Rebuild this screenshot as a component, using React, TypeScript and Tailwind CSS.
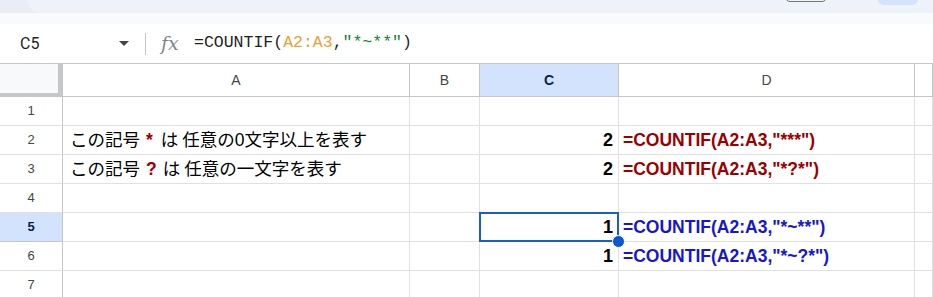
import React from "react";

const cols = ["", "A", "B", "C", "D", ""];

function Cell({ children, className = "" }: { children?: React.ReactNode; className?: string }) {
  return (
    <div className={`relative flex items-center border-b border-r border-[#e1e1e1] ${className}`}>
      {children}
    </div>
  );
}

function RowHead({ n, active }: { n: number; active?: boolean }) {
  return (
    <div
      className={`flex items-center justify-center border-b border-r text-[13px] ${
        active
          ? "bg-[#d3e3fd] border-b-[#c4c7c5] border-r-[#c4c7c5] font-bold text-[#0b1f46]"
          : "bg-white border-b-[#e1e1e1] border-r-[#c4c7c5] text-[#444746]"
      }`}
    >
      {n}
    </div>
  );
}

const red = "text-[#990000]";
const blue = "text-[#1717c9]";

export default function App() {
  const rows: { n: number; a?: React.ReactNode; c?: string; d?: React.ReactNode; sel?: boolean }[] = [
    { n: 1 },
    {
      n: 2,
      a: (
        <>
          この記号<span className={`ml-[6px] mr-[8px] font-bold ${red}`}>*</span>は<span className="ml-[4px]">任意の0文字以上を表す</span>
        </>
      ),
      c: "2",
      d: <span className={red}>=COUNTIF(A2:A3,"***")</span>,
    },
    {
      n: 3,
      a: (
        <>
          この記号<span className={`ml-[6px] mr-[6px] font-bold ${red}`}>?</span>は<span className="ml-[4px]">任意の一文字を表す</span>
        </>
      ),
      c: "2",
      d: <span className={red}>=COUNTIF(A2:A3,"*?*")</span>,
    },
    { n: 4 },
    { n: 5, c: "1", d: <span className={blue}>=COUNTIF(A2:A3,"*~**")</span>, sel: true },
    { n: 6, c: "1", d: <span className={blue}>=COUNTIF(A2:A3,"*~?*")</span> },
    { n: 7 },
  ];

  return (
    <div className="w-[933px] h-[297px] overflow-hidden bg-white font-['Liberation_Sans','Noto_Sans_CJK_JP',Arial,sans-serif]">
      {/* top chrome */}
      <div className="relative h-[13px] bg-[#e9eef6]">
        <div className="ml-[28px] h-full rounded-bl-[14px] bg-[#eef2f9]" />
        <div className="absolute left-[785px] top-[-12px] h-[14px] w-[42px] rounded-[5px] border border-[#747775]" />
        <div className="absolute left-[878px] top-[-12px] h-[17px] w-[40px] rounded-[6px] bg-[#d3e3fd]" />
      </div>
      <div className="h-[11px] bg-[#f8fafd]" />

      {/* formula bar */}
      <div className="flex h-[40px] items-center border-b border-[#c4c7c5] bg-white">
        <div className="w-[112px] pl-[20px] font-['Roboto',sans-serif] text-[16px] text-[#1f1f1f]">C5</div>
        <svg width="10" height="5" viewBox="0 0 10 5" className="ml-[7px]">
          <path d="M0 0h10L5 5z" fill="#444746" />
        </svg>
        <div className="ml-[16px] h-[22px] w-px bg-[#c4c7c5]" />
        <div className="ml-[15px] w-[22px] font-['DejaVu_Serif',serif] text-[19px] italic leading-none text-[#80868b]">
          fx
        </div>
        <div className="ml-[11px] font-['Liberation_Mono',monospace] text-[16.5px] text-[#1f1f1f]">
          =COUNTIF(<span className="text-[#f09d33]">A2:A3</span>,<span className="text-[#188038]">"*~**"</span>)
        </div>
      </div>

      {/* grid */}
      <div className="grid grid-cols-[63px_347px_70px_139px_296px_1fr] grid-rows-[33px_repeat(7,29px)]">
        {cols.map((c, i) =>
          i === 0 ? (
            <div key={i} className="border-b-[4px] border-r-[5px] border-[#c7c7c7] bg-[#f8f9fa]" />
          ) : (
            <div
              key={i}
              className={`flex items-center justify-center border-b border-r border-[#c4c7c5] text-[14px] ${
                c === "C" ? "bg-[#d3e3fd] font-bold text-[#0b1f46]" : "bg-white text-[#444746]"
              }`}
            >
              {c}
            </div>
          )
        )}
        {rows.map((r) => (
          <React.Fragment key={r.n}>
            <RowHead n={r.n} active={r.sel} />
            <Cell className="whitespace-nowrap pl-[7px] text-[17.5px] text-black">{r.a}</Cell>
            <Cell />
            <Cell className="justify-end pr-[5px] text-[18px] font-bold text-black">
              {r.c}
              {r.sel && (
                <>
                  <div className="absolute left-[-1px] top-[-1px] h-[30px] w-[140px] border-2 border-[#1a5fc8]" />
                  <div className="absolute bottom-[-7px] right-[-7px] z-10 h-[13px] w-[13px] rounded-full border border-white bg-[#0b57d0]" />
                </>
              )}
            </Cell>
            <Cell className="whitespace-nowrap pl-[4px] text-[17.5px] font-bold">{r.d}</Cell>
            <Cell />
          </React.Fragment>
        ))}
      </div>
    </div>
  );
}
